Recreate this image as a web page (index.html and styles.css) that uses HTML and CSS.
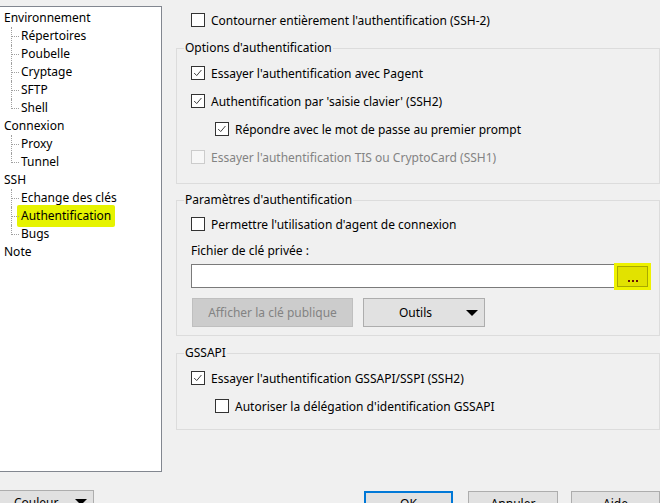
FILE: index.html
```html
<!DOCTYPE html>
<html lang="fr">
<head>
<meta charset="utf-8">
<title>Authentification</title>
<link rel="stylesheet" href="styles.css">
</head>
<body>
<div class="window">
  <div class="main">
    <div class="tree">
      <ul class="tree-root">
        <li><span class="node">Environnement</span>
          <ul class="children">
            <li><span class="node">Répertoires</span></li>
            <li><span class="node">Poubelle</span></li>
            <li><span class="node">Cryptage</span></li>
            <li><span class="node">SFTP</span></li>
            <li><span class="node">Shell</span></li>
          </ul>
        </li>
        <li><span class="node">Connexion</span>
          <ul class="children">
            <li><span class="node">Proxy</span></li>
            <li><span class="node">Tunnel</span></li>
          </ul>
        </li>
        <li><span class="node">SSH</span>
          <ul class="children">
            <li><span class="node">Echange des clés</span></li>
            <li><span class="node selected">Authentification</span></li>
            <li><span class="node">Bugs</span></li>
          </ul>
        </li>
        <li><span class="node">Note</span></li>
      </ul>
    </div>

    <div class="panel">
      <label class="check"><span class="box"></span>Contourner entièrement l'authentification (SSH-2)</label>

      <fieldset class="group group-options">
        <legend>Options d'authentification</legend>
        <label class="check"><span class="box"><svg viewBox="0 0 14 14"><polyline points="2.5,7 5.5,10 11,3.5"/></svg></span>Essayer l'authentification avec Pagent</label>
        <label class="check"><span class="box"><svg viewBox="0 0 14 14"><polyline points="2.5,7 5.5,10 11,3.5"/></svg></span>Authentification par 'saisie clavier' (SSH2)</label>
        <label class="check nested"><span class="box"><svg viewBox="0 0 14 14"><polyline points="2.5,7 5.5,10 11,3.5"/></svg></span>Répondre avec le mot de passe au premier prompt</label>
        <label class="check disabled"><span class="box"></span>Essayer l'authentification TIS ou CryptoCard (SSH1)</label>
      </fieldset>

      <fieldset class="group group-params">
        <legend>Paramètres d'authentification</legend>
        <label class="check"><span class="box"></span>Permettre l'utilisation d'agent de connexion</label>
        <div class="field-label">Fichier de clé privée :</div>
        <div class="file-input">
          <span class="browse"><i></i><i></i><i></i></span>
        </div>
        <div class="btn-row">
          <span class="btn btn-disabled btn-show">Afficher la clé publique</span>
          <span class="btn btn-tools">Outils<span class="tri"></span></span>
        </div>
      </fieldset>

      <fieldset class="group group-gss">
        <legend>GSSAPI</legend>
        <label class="check"><span class="box"><svg viewBox="0 0 14 14"><polyline points="2.5,7 5.5,10 11,3.5"/></svg></span>Essayer l'authentification GSSAPI/SSPI (SSH2)</label>
        <label class="check nested"><span class="box"></span>Autoriser la délégation d'identification GSSAPI</label>
      </fieldset>
    </div>
  </div>

  <div class="footer">
    <span class="btn btn-color">Couleur<span class="tri"></span></span>
    <span class="btn btn-ok">OK</span>
    <span class="btn btn-cancel">Annuler</span>
    <span class="btn btn-help">Aide</span>
  </div>
</div>
</body>
</html>
```

FILE: styles.css
```css
html, body {
  margin: 0;
  padding: 0;
  background: #f0f0f0;
  overflow: hidden;
}

.window {
  width: 660px;
  height: 503px;
  overflow: hidden;
  font-family: "Noto Sans", "Open Sans", sans-serif;
  font-size: 12px;
  color: #000;
}

.main {
  display: flex;
  align-items: flex-start;
}

/* ---------- tree ---------- */
.tree {
  box-sizing: border-box;
  width: 163px;
  height: 466px;
  margin-top: 6px;
  margin-left: -1px;
  background: #fff;
  border: 1px solid #828790;
  padding-top: 2px;
  padding-left: 4px;
}

.tree ul {
  list-style: none;
  margin: 0;
  padding: 0;
}

.node {
  display: inline-block;
  height: 18px;
  line-height: 18px;
  white-space: nowrap;
}

.children {
  margin-left: 7px !important;
}

.children > li {
  position: relative;
  padding-left: 10px;
}

.children > li::before {
  content: "";
  position: absolute;
  left: 0;
  top: 0;
  width: 7px;
  height: 9px;
  border-left: 1px dotted #a0a0a0;
  border-bottom: 1px dotted #a0a0a0;
}

.children > li:not(:last-child)::after {
  content: "";
  position: absolute;
  left: 0;
  top: 9px;
  bottom: 0;
  border-left: 1px dotted #a0a0a0;
}

.selected {
  background: #e6f300;
  padding: 0 4px;
  margin: -2px -4px;
  height: 22px;
  line-height: 22px;
  border-radius: 2px;
}

/* ---------- right panel ---------- */
.panel {
  width: 484px;
  margin-left: 14px;
  padding-top: 6px;
}

.check {
  display: flex;
  align-items: center;
  height: 28px;
  white-space: nowrap;
}

.check.nested {
  margin-left: 24px;
}

.panel > .check {
  margin-left: 15px;
}

.box {
  box-sizing: border-box;
  flex: none;
  width: 14px;
  height: 14px;
  margin-right: 6px;
  border: 1px solid #333;
  background: #fff;
  display: flex;
}

.box svg {
  width: 12px;
  height: 12px;
  fill: none;
  stroke: #333;
  stroke-width: 1.1;
}

.check.disabled {
  color: #838383;
}

.check.disabled .box {
  border-color: #cccccc;
  background: #f7f7f7;
}

.group {
  margin: 0;
  min-width: 0;
  border: 1px solid #dcdcdc;
  padding: 3px 9px 12px 14px;
}

.group legend {
  margin-left: -7px;
  padding: 0 1px;
  line-height: 16px;
}

.group-options {
  margin-top: 6px;
}

.group-params {
  margin-top: 8px;
  padding-top: 2px;
  padding-bottom: 8px;
}

.group-gss {
  margin-top: 9px;
  padding-bottom: 9px;
}

.field-label {
  margin-top: 5px;
  line-height: 16px;
}

.file-input {
  box-sizing: border-box;
  margin-top: 5px;
  height: 24px;
  background: #fff;
  border: 1px solid #7a7a7a;
  display: flex;
  justify-content: flex-end;
  align-items: center;
  padding-right: 1px;
}

.browse {
  box-sizing: border-box;
  width: 31px;
  height: 21px;
  background: #e2e200;
  border: 1px solid #a9a900;
  box-shadow: 0 0 0 3px #eef200;
  display: flex;
  justify-content: center;
  align-items: flex-end;
  gap: 2px;
  padding-bottom: 4px;
}

.browse i {
  width: 2px;
  height: 2px;
  background: #6b1500;
}

.btn-row {
  display: flex;
  gap: 10px;
  margin-top: 10px;
  margin-left: 1px;
}

.btn {
  box-sizing: border-box;
  display: flex;
  align-items: center;
  justify-content: center;
  height: 29px;
  background: #e1e1e1;
  border: 1px solid #adadad;
  white-space: nowrap;
}

.btn-disabled {
  background: #cccccc;
  border-color: #bfbfbf;
  color: #838383;
}

.btn-show {
  width: 161px;
}

.btn-tools {
  width: 122px;
  justify-content: flex-start;
  padding-left: 35px;
}

.tri {
  display: inline-block;
  width: 0;
  height: 0;
  border-left: 6px solid transparent;
  border-right: 6px solid transparent;
  border-top: 6px solid #000;
}

.btn-tools .tri {
  margin-left: auto;
  margin-right: 6px;
}

/* ---------- footer ---------- */
.footer {
  display: flex;
  align-items: flex-start;
  margin-top: 18px;
}

.footer .btn {
  height: 24px;
}

.btn-color {
  width: 95px;
  margin-left: -1px;
  justify-content: flex-start;
  padding-left: 14px;
}

.btn-color .tri {
  margin-left: auto;
  margin-right: 6px;
}

.btn-ok {
  width: 89px;
  margin-left: auto;
  margin-top: 1px;
  border: 2px solid #0078d7;
}

.btn-cancel {
  width: 90px;
  margin-left: 15px;
  margin-top: 1px;
}

.btn-help {
  width: 89px;
  margin-left: 13px;
  margin-top: 1px;
}
```
